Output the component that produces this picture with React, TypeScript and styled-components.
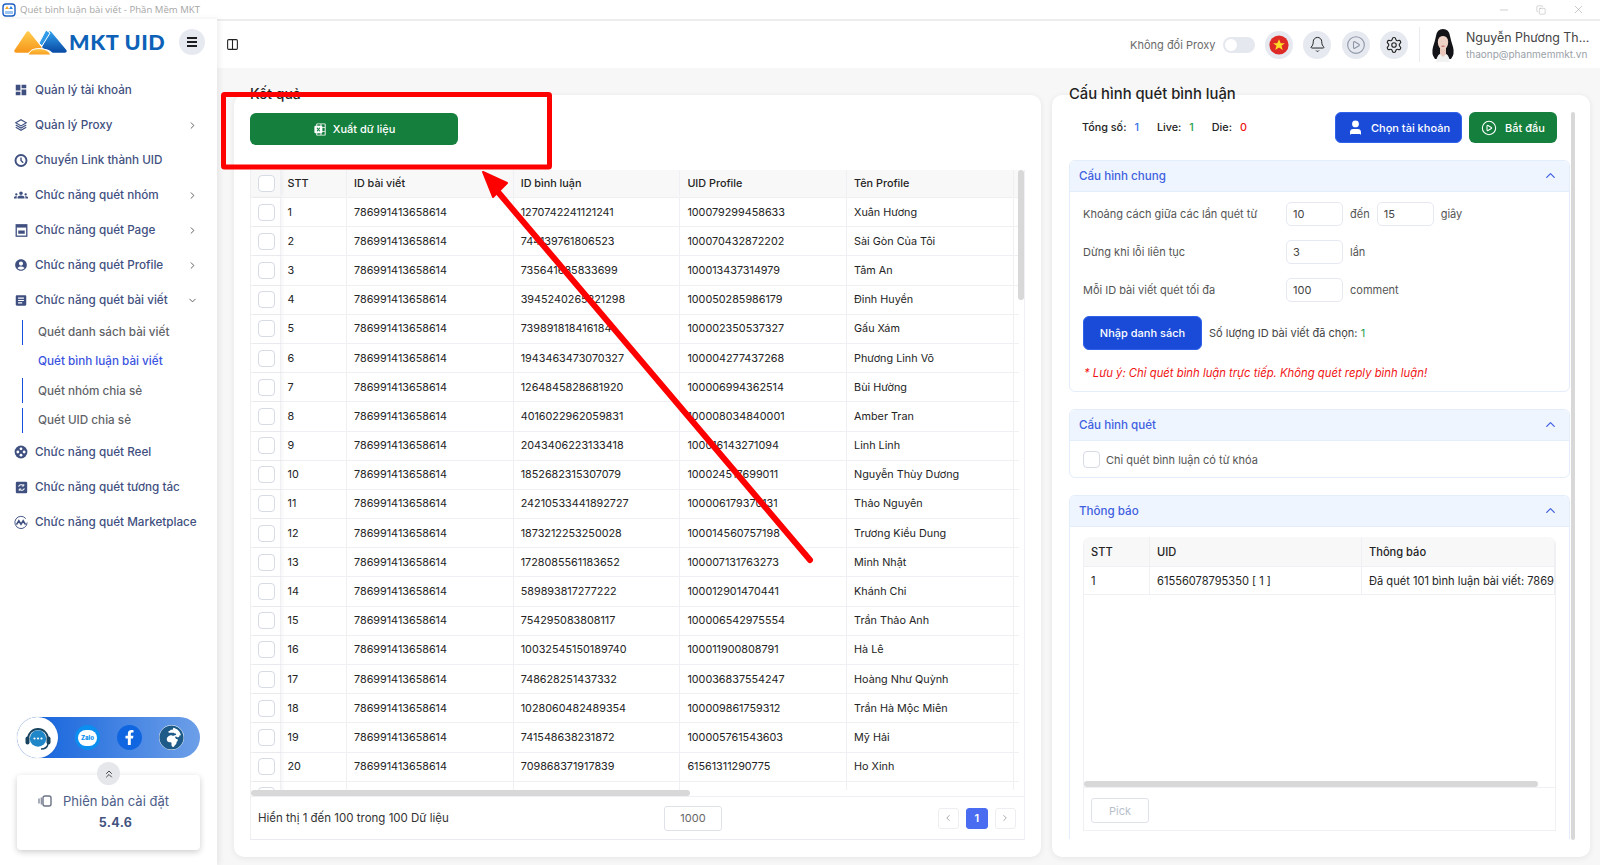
import React from "react";
import styled, { createGlobalStyle } from "styled-components";
import { ChevronRight, ChevronDown, ChevronUp, ChevronLeft, ChevronsUp, Bell, Settings, CirclePlay, Columns2, Minus, X, Copy, User } from "lucide-react";
import { MdDashboard, MdGroups, MdAccountCircle, MdArticle } from "react-icons/md";
import { FaFacebookF, FaGlobeAfrica } from "react-icons/fa";
import { PiMicrosoftExcelLogoFill } from "react-icons/pi";

const GlobalStyle = createGlobalStyle`
  html, body { margin: 0; padding: 0; background: #f7f7f7; }
  * { box-sizing: border-box; }
  body { font-family: Inter, "Noto Sans", sans-serif; }
`;

const Page = styled.div`
  width: 1600px; height: 865px; overflow: hidden; display: flex; flex-direction: column; position: relative; background: #f7f7f7;
`;
const TitleBar = styled.div`
  height: 19px; background: #fff; display: flex; align-items: center; padding-left: 2px; gap: 4px;
  font-size: 9.6px; color: #a6a6a6; flex: none;
`;
const TitleText = styled.span`flex: 1; font-family: "Open Sans", sans-serif;`;
const WinControls = styled.div`
  display: flex; align-items: center; gap: 26px; padding-right: 15px; color: #9c9c9c;
`;
const Body = styled.div`display: flex; flex: 1; min-height: 0;`;
const Sidebar = styled.aside`
  width: 217px; flex: none; background: #fff; display: flex; flex-direction: column; padding-top: 7px;
  box-shadow: 2px 0 6px rgba(0,0,0,.08); position: relative; z-index: 2;
`;
const LogoRow = styled.div`
  display: flex; align-items: center; height: 32px; padding-left: 13px; position: relative;
`;
const LogoText = styled.span`
  font-family: Lato, Inter, sans-serif; font-weight: 900; font-size: 21.6px; letter-spacing: .6px; margin-left: 1px;
  color: #0d62b8; white-space: nowrap;
`;
const Burger = styled.button`
  width: 26px; height: 26px; border-radius: 50%; border: 0; background: #e6e9f0; padding: 0; margin-left: auto; margin-right: 12px;
  display: flex; flex-direction: column; gap: 2px; align-items: center; justify-content: center;
  span { width: 10px; height: 2px; background: #1d1d1f; display: block; }
`;
const Menu = styled.nav`display: flex; flex-direction: column; padding-top: 14.5px;`;
const MenuItem = styled.div`
  height: 35px; display: flex; align-items: center; padding-left: 14px; padding-right: 19px; gap: 7px;
  font-size: 11.7px; font-weight: 500; color: #3f5080; white-space: nowrap;
`;
const MenuIcon = styled.span`
  width: 14px; height: 14px; display: flex; align-items: center; justify-content: center; flex: none; color: #3f5080;
`;
const MenuLabel = styled.span`flex: 1;`;
const SubMenu = styled.div`display: flex; flex-direction: column;`;
const SubWrap = styled.div`display: flex; align-items: center; height: 29.3px;`;
const SubItem = styled.div<{ $active?: boolean }>`
  height: 25px; margin-left: 22px; padding-left: 15px; display: flex; align-items: center;
  border-left: 1.5px solid ${p => (p.$active ? "transparent" : "#1550dc")};
  font-size: 11.7px; font-weight: 500; color: ${p => (p.$active ? "#3a53e0" : "#5f6368")}; white-space: nowrap;
`;
const SideBottom = styled.div`
  margin-top: auto; padding: 0 17px 15px; display: flex; flex-direction: column; align-items: stretch;
`;
const Contact = styled.div`
  height: 41px; border-radius: 21px; width: 183px; background: linear-gradient(90deg, #0d5fdc 0%, #6d9fe8 100%);
  display: flex; align-items: center; padding-right: 16px; justify-content: space-between;
`;
const HeadsetWrap = styled.div`
  width: 41px; height: 41px; border-radius: 50%; background: #fff; display: flex; align-items: center; justify-content: center;
  box-shadow: 0 0 2px rgba(0,0,0,.15);
`;
const ContactIcon = styled.div<{ $bg: string }>`
  width: 25px; height: 25px; border-radius: 50%; background: ${p => p.$bg}; color: #fff;
  display: flex; align-items: center; justify-content: center;
`;
const ContactGroup = styled.div`display: flex; gap: 17px; align-items: center;`;
const ZaloBubble = styled.div`
  width: 19px; height: 16px; border-radius: 8px; background: #fff; color: #0a8ff0; font-size: 6px; font-weight: 800;
  display: flex; align-items: center; justify-content: center;
`;
const VersionCard = styled.div`
  height: 75px; background: #fff; border-radius: 4px; box-shadow: 0 2px 6px rgba(0,0,0,.2); margin-top: 17px; position: relative;
  display: flex; flex-direction: column; align-items: center; padding: 18px 10px 0 0; gap: 6px;
`;
const Expander = styled.div`
  position: absolute; top: -13px; left: 80px; width: 23px; height: 23px; border-radius: 50%; background: #e5e7eb; color: #444;
  display: flex; align-items: center; justify-content: center;
`;
const VersionLine = styled.div`
  display: flex; align-items: center; gap: 11px; font-size: 13px; color: #4c5d88;
`;
const VersionNum = styled.div`font-size: 12.5px; font-weight: 700; color: #43547f; letter-spacing: .3px; margin-left: 24px;`;

const Main = styled.main`flex: 1; min-width: 0; display: flex; flex-direction: column;`;
const Header = styled.header`
  height: 49px; background: #fff; border-top: 2px solid #ededed; display: flex; align-items: center; padding: 0 8px 0 9px; flex: none;
  color: #222;
`;
const HeaderRight = styled.div`margin-left: auto; display: flex; align-items: center;`;
const ProxyLabel = styled.span`font-size: 11px; color: #6b6b6b; margin-right: 7px;`;
const Toggle = styled.div`
  width: 32px; height: 16px; border-radius: 8px; background: #e5e8ee; padding: 2px; margin-right: 10px;
  &::before { content: ""; display: block; width: 12px; height: 12px; border-radius: 50%; background: #fff; }
`;
const RoundBtn = styled.div`
  width: 28px; height: 28px; border-radius: 50%; background: #e6e9f0; display: flex; align-items: center; justify-content: center; margin-right: 10.5px; color: #222;
`;
const Divider = styled.div`width: 1.5px; height: 35px; background: #e9ebef; margin: 0 8px 0 0;`;
const UserBox = styled.div`display: flex; flex-direction: column; margin-left: 8px; width: 126px; white-space: nowrap; gap: 3px;`;
const UserName = styled.div`font-size: 12.4px; color: #444;`;
const UserMail = styled.div`font-size: 10px; color: #9a9fa8;`;

const Content = styled.div`flex: 1; min-height: 0; display: flex; gap: 11px; padding: 27px 10px 8px 17px;`;
const Card = styled.section<{ $w: number }>`
  width: ${p => p.$w}px; background: #fff; border-radius: 10px; box-shadow: 0 1px 6px rgba(0,0,0,.08);
  display: flex; flex-direction: column; flex: none; height: 762px;
`;
const LeftCard = styled(Card)`padding: 0 16px 17px 16px;`;
const RightCard = styled(Card)`padding: 0 20px 17px 17px; position: relative;`;
const CardTitle = styled.h2`
  margin: -10px 0 0; height: 18px; line-height: 18px; font-size: 14px; font-weight: 500; color: #1f1f1f; white-space: nowrap;
`;
const RightTitle = styled(CardTitle)`font-size: 14.8px;`;
const Btn = styled.button<{ $bg: string }>`
  background: ${p => p.$bg}; color: #fff; border: 0; border-radius: 6px; font-family: inherit; font-size: 11px; font-weight: 500;
  display: flex; align-items: center; justify-content: center; gap: 5px; padding: 0; white-space: nowrap;
`;
const ExportBtn = styled(Btn)`width: 208px; height: 32px; margin-top: 10px; flex: none;`;
const TableBox = styled.div`
  margin-top: 25px; flex: 1; min-height: 0; width: 775px; position: relative; display: flex; flex-direction: column; border-left: 1px solid #eef0f4; border-right: 1px solid #eef0f4;
`;
const TableScroll = styled.div`height: 620px; overflow: hidden; padding-right: 5px; flex: none; position: relative;`;
const DataRow = styled.div<{ $head?: boolean }>`
  display: grid; grid-template-columns: 29.5px 66.5px 166.7px 166.7px 166.7px 166.7px 60px; height: ${p => (p.$head ? "28px" : "29.2px")};
  border-bottom: 1px solid #eef0f4; background: ${p => (p.$head ? "#f8f8f8" : "#fff")};
  font-size: 10.8px; color: #242424; font-weight: ${p => (p.$head ? 500 : 400)};
  ${p => p.$head && "padding-bottom: 1px;"}
`;
const Cell = styled.div`
  display: flex; align-items: center; padding-left: 7px; border-right: 1px solid #eef0f4; white-space: nowrap; overflow: hidden;
`;
const CheckCell = styled(Cell)`padding-left: 7px; box-shadow: 2px 0 3px rgba(0,0,0,.04);`;
const Check = styled.span`
  width: 17px; height: 17px; border: 1px solid #d6dbe4; border-radius: 4px; background: #fff; display: block; flex: none;
`;
const VThumb = styled.div`
  position: absolute; right: 0; top: 0; width: 6px; height: 130px; background: #d8d8d8; border-radius: 3px;
`;
const HThumb = styled.div<{ $w: number }>`
  height: 6px; width: ${p => p.$w}px; background: #d8d8d8; border-radius: 3px; flex: none;
`;
const HTrack = styled.div`height: 7px; border-bottom: 1px solid #eef0f4; flex: none;`;
const TableFooter = styled.div`
  flex: 1; display: flex; align-items: center; padding: 0 8px 0 7px; position: relative; border-bottom: 1px solid #e9ebf0; font-size: 11.5px; color: #333;
`;
const FooterText = styled.span`width: 406px;`;
const PageSize = styled.div`
  width: 58px; height: 25px; border: 1px solid #dfe2e8; border-radius: 3px; display: flex; align-items: center; justify-content: center; font-size: 11px; color: #666;
`;
const Pager = styled.div`margin-left: auto; display: flex; gap: 7px;`;
const PageBtn = styled.div<{ $on?: boolean }>`
  width: 21.5px; height: 21px; border-radius: 3px; display: flex; align-items: center; justify-content: center; font-size: 11px; font-weight: 600;
  background: ${p => (p.$on ? "#4a6cf0" : "#fff")}; color: ${p => (p.$on ? "#fff" : "#999")}; border: 1px solid ${p => (p.$on ? "#4a6cf0" : "#eceef2")};
`;

const Toolbar = styled.div`display: flex; align-items: center; margin-top: 9px; height: 31px; flex: none; padding-right: 13px; padding-left: 13px;`;
const Stat = styled.span`font-size: 10.8px; font-weight: 500; color: #222; margin-right: 18px; display: flex; gap: 8px;`;
const StatVal = styled.span<{ $c: string }>`color: ${p => p.$c};`;
const BtnGroup = styled.div`margin-left: auto; display: flex; gap: 7px;`;
const ChooseBtn = styled(Btn)`width: 127px; height: 31px; gap: 7px; border: 1px solid #2f62ea;`;
const StartBtn = styled(Btn)`width: 88px; height: 31px; gap: 8px;`;
const Section = styled.div<{ $h: number; $open?: boolean }>`
  height: ${p => p.$h}px; flex: none; border: 1px solid #e3edfb; border-radius: 6px 6px ${p => (p.$open ? "0 0" : "6px 6px")}; display: flex; flex-direction: column;
  ${p => p.$open && "border-bottom: 0;"}
`;
const SectionHead = styled.div`
  height: 31px; flex: none; background: #eef5ff; border-bottom: 1px solid #e3edfb; border-radius: 6px 6px 0 0; display: flex; align-items: center; justify-content: space-between;
  padding: 0 11px 1px 9px; color: #3f5fe0; font-size: 11.6px; font-weight: 500;
`;
const Stack = styled.div`display: flex; flex-direction: column; gap: 17px; margin-top: 17px;`;
const SectionBody = styled.div`padding: 10px 13px; display: flex; flex-direction: column; gap: 14px; font-size: 11px; color: #555;`;
const FieldRow = styled.div`display: flex; align-items: center; height: 24px;`;
const FieldLabel = styled.span`width: 203px; flex: none;`;
const NumInput = styled.div`
  width: 57px; height: 24px; border: 1px solid #e6e9f2; border-radius: 5px; padding-left: 6px; display: flex; align-items: center; color: #444; background: #fff;
`;
const Unit = styled.span`margin: 0 7px;`;
const ImportRow = styled.div`display: flex; align-items: center; height: 34px; gap: 7px; color: #444;`;
const ImportBtn = styled(Btn)`width: 119px; height: 34px; border: 1px solid #2f62ea;`;
const Note = styled.div`font-style: italic; color: #f01414; font-size: 11.3px; margin-top: 2px; padding-left: 1px;`;
const CheckRow = styled.div`display: flex; align-items: center; gap: 6px; color: #555;`;
const NotifyBody = styled.div`flex: 1; min-height: 0; padding: 10px 13px 8px 13px; display: flex;`;
const NotifyTable = styled.div`
  flex: 1; border-radius: 8px 8px 0 0; border: 1px solid #eef0f4; border-top: 0; border-bottom: 0; display: flex; flex-direction: column; overflow: hidden;
`;
const NotifyRow = styled.div<{ $head?: boolean }>`
  display: grid; grid-template-columns: 66px 212px 1fr; height: ${p => (p.$head ? "30px" : "28px")}; flex: none;
  background: ${p => (p.$head ? "#f8f8f8" : "#fff")}; border-bottom: 1px solid #eef0f4; font-size: 11.1px; color: #242424; font-weight: ${p => (p.$head ? 500 : 400)};
`;
const Spacer = styled.div`flex: 1;`;
const PickArea = styled.div`
  height: 43px; flex: none; border-bottom: 1px solid #f0f1f4; padding: 10px 7px 0; display: flex;
`;
const PickBtn = styled.div`
  width: 58px; height: 25px; border: 1px solid #dfe2e8; border-radius: 3px; font-size: 11px; color: #b9bfca; display: flex; align-items: center; justify-content: center;
`;
const RightScroll = styled.div`
  position: absolute; right: 15.5px; top: 17px; width: 4px; height: 728px; background: #d8d8d8; border-radius: 2px;
`;
const Annotation = styled.svg`position: absolute; inset: 0; width: 1600px; height: 865px; pointer-events: none; z-index: 10;`;

const rows: [string, string, string][] = [
  ["1270742241121241", "100079299458633", "Xuân Hương"],
  ["744139761806523", "100070432872202", "Sài Gòn Của Tôi"],
  ["735641685833699", "100013437314979", "Tâm An"],
  ["3945240265221298", "100050285986179", "Đinh Huyền"],
  ["739891818416184", "100002350537327", "Gấu Xám"],
  ["1943463473070327", "100004277437268", "Phương Linh Võ"],
  ["1264845828681920", "100006994362514", "Bùi Hường"],
  ["4016022962059831", "100008034840001", "Amber Tran"],
  ["2043406223133418", "100016143271094", "Linh Linh"],
  ["1852682315307079", "100024517699011", "Nguyễn Thùy Dương"],
  ["24210533441892727", "100006179370131", "Thảo Nguyên"],
  ["1873212253250028", "100014560757198", "Trương Kiều Dung"],
  ["1728085561183652", "100007131763273", "Minh Nhật"],
  ["589893817277222", "100012901470441", "Khánh Chi"],
  ["754295083808117", "100006542975554", "Trần Thảo Anh"],
  ["10032545150189740", "100011900808791", "Hà Lê"],
  ["748628251437332", "100036837554247", "Hoàng Như Quỳnh"],
  ["1028060482489354", "100009861759312", "Trần Hà Mộc Miên"],
  ["741548638231872", "100005761543603", "Mỹ Hải"],
  ["709868371917839", "61561311290775", "Ho Xinh"],
  ["", "", ""],
];

const AppGlyph = () => (
  <svg width="14" height="14" viewBox="0 0 14 14">
    <rect x="1" y="1" width="12" height="12" rx="3" fill="#fff" stroke="#1d5fc4" strokeWidth="1.4" />
    <path d="M3 6l2-3 2 3z" fill="#f5a623" />
    <path d="M7 6l2-3 2 3z" fill="#2f7fe0" />
    <rect x="3" y="8" width="8" height="3" fill="#9cc4f2" />
  </svg>
);
const Logo = () => (
  <svg width="55" height="26" viewBox="0 0 55 26">
    <defs>
      <linearGradient id="lo" x1="0" y1="0" x2="0" y2="1"><stop offset="0" stopColor="#ffc94a" /><stop offset="1" stopColor="#f79a1e" /></linearGradient>
      <linearGradient id="lb" x1="0" y1="0" x2="0" y2="1"><stop offset="0" stopColor="#2f9be8" /><stop offset="1" stopColor="#0b4fa8" /></linearGradient>
    </defs>
    <path d="M3 22 L15 4 L27 19 Q19 17 15 22 Z" fill="url(#lo)" stroke="url(#lo)" strokeWidth="3.5" strokeLinejoin="round" />
    <path d="M31 18 L37 4 L52 22 L40 22 Q38 19 31 18 Z" fill="url(#lb)" stroke="url(#lb)" strokeWidth="3.5" strokeLinejoin="round" />
    <path d="M29 17 L37 4 L33 1 L26 14 Z" fill="#2f9be8" stroke="#fff" strokeWidth="1" />
    <path d="M15 26 Q17 19.5 26 19.5 Q35 19.5 38 26 Z" fill="url(#lo)" stroke="#fff" strokeWidth="1" />
  </svg>
);
const ProxyIcon = () => (
  <svg width="14" height="14" viewBox="0 0 16 16" fill="none" stroke="#3f5080" strokeWidth="1.3">
    <path d="M8 2l6 3.5L8 9 2 5.5z" /><path d="M2 8l6 3.5L14 8" /><path d="M2 10.5L8 14l6-3.5" />
  </svg>
);
const LinkClock = () => (
  <svg width="15" height="15" viewBox="0 0 16 16" fill="none">
    <circle cx="8" cy="8" r="6.3" stroke="#3f5080" strokeWidth="2.2" />
    <path d="M8 4.5V8l2.5 2.5" stroke="#3f5080" strokeWidth="1.6" />
  </svg>
);
const PageIcon = () => (
  <svg width="13" height="13" viewBox="0 0 16 16">
    <rect x="1.5" y="1" width="13" height="14" fill="none" stroke="#3f5080" strokeWidth="1.6" />
    <rect x="1.5" y="1" width="13" height="3.4" fill="#3f5080" />
    <rect x="4" y="8" width="8" height="4" fill="#3f5080" />
  </svg>
);
const ReelIcon = () => (
  <svg width="14" height="14" viewBox="0 0 16 16">
    <circle cx="8" cy="8" r="7.3" fill="#3f5080" />
    <circle cx="8" cy="4.4" r="1.6" fill="#fff" /><circle cx="8" cy="11.6" r="1.6" fill="#fff" /><circle cx="4.4" cy="8" r="1.6" fill="#fff" /><circle cx="11.6" cy="8" r="1.6" fill="#fff" />
  </svg>
);
const InteractIcon = () => (
  <svg width="13" height="13" viewBox="0 0 16 16">
    <rect x="1" y="1" width="14" height="14" rx="1.5" fill="#3f5080" />
    <path d="M4.5 7a3.5 3 0 0 1 6-1.4M11.5 9a3.5 3 0 0 1-6 1.4" stroke="#fff" strokeWidth="1.3" fill="none" />
    <path d="M10.8 3.8v2.4H8.4M5.2 12.2V9.8h2.4" stroke="#fff" strokeWidth="1.1" fill="none" />
  </svg>
);
const MarketIcon = () => (
  <svg width="15" height="15" viewBox="0 0 16 16" fill="none" stroke="#3f5080">
    <path d="M13.5 3.6A7 7 0 1 0 15 8" strokeWidth="1.1" />
    <path d="M2.8 10.5L5.5 6l2.5 4 2.5-4 2.7 4.5" strokeWidth="1.8" />
  </svg>
);
const VersionIcon = () => (
  <svg width="14" height="12" viewBox="0 0 14 12">
    <rect x="5" y="1" width="8" height="10" rx="2" fill="none" stroke="#6b7385" strokeWidth="1.4" />
    <path d="M3.4 2.5v7M1 3.5v5" stroke="#8b92a3" strokeWidth="1.5" />
  </svg>
);
const Headset = () => (
  <svg width="28" height="28" viewBox="0 0 28 28">
    <path d="M4 15a10 10 0 0 1 20 0" fill="none" stroke="#17435f" strokeWidth="1.8" />
    <rect x="1.5" y="12.5" width="4" height="8" rx="2" fill="#17435f" />
    <rect x="22.5" y="12.5" width="4" height="8" rx="2" fill="#17435f" />
    <path d="M24 20q-1 5-7 5" fill="none" stroke="#17435f" strokeWidth="1.4" />
    <circle cx="14" cy="14.5" r="8.2" fill="#1f86c8" />
    <circle cx="10.5" cy="14.5" r="1.1" fill="#fff" /><circle cx="14" cy="14.5" r="1.1" fill="#fff" /><circle cx="17.5" cy="14.5" r="1.1" fill="#fff" />
  </svg>
);
const Flag = () => (
  <svg width="20" height="20" viewBox="0 0 20 20">
    <circle cx="10" cy="10" r="9.6" fill="#de2a26" />
    <path d="M10 4.2l1.7 4h4.2l-3.4 2.6 1.3 4.2L10 12.4 6.2 15l1.3-4.2L4.1 8.2h4.2z" fill="#ffde2a" />
  </svg>
);
const Avatar = () => (
  <svg width="30" height="34" viewBox="0 0 30 34">
    <path d="M8 8Q9 1 15 1q6 0 7 7 1 5 3 11 2 7-2 12l-16 0Q3 26 5 19 7 13 8 8Z" fill="#141318" />
    <path d="M8 34q1-9 7-9 6 0 7 9z" fill="#f3f2f2" />
    <path d="M12 20h6v6l-3 3-3-3z" fill="#e9c8bb" />
    <ellipse cx="15" cy="14" rx="5.2" ry="7.5" fill="#eed2c6" />
    <path d="M9.5 12Q10 5 15 5q5 0 5.5 7-2-4-5.5-4t-5.5 4Z" fill="#141318" />
    <path d="M13.5 18.2h3" stroke="#b8434a" strokeWidth=".9" />
  </svg>
);
const Annotations = () => (
  <Annotation viewBox="0 0 1600 865">
    <rect x="223.5" y="94.5" width="326" height="72.5" fill="none" stroke="#ff0000" strokeWidth="5" rx="1" />
    <path d="M810 560 L498 192" stroke="#ff0000" strokeWidth="6" strokeLinecap="round" />
    <path d="M483 172 L507 183 L493 197 Z" fill="#ff0000" stroke="#ff0000" strokeWidth="2" strokeLinejoin="round" />
  </Annotation>
);

export default function App() {
  return (
    <Page>
      <GlobalStyle />
      <TitleBar>
        <AppGlyph />
        <TitleText>Quét bình luận bài viết - Phần Mềm MKT</TitleText>
        <WinControls>
          <Minus size={12} strokeWidth={1} />
          <Copy size={10} strokeWidth={1} />
          <X size={13} strokeWidth={1} />
        </WinControls>
      </TitleBar>
      <Body>
        <Sidebar>
          <LogoRow>
            <Logo />
            <LogoText>MKT UID</LogoText>
            <Burger><span /><span /><span /></Burger>
          </LogoRow>
          <Menu>
            <MenuItem><MenuIcon><MdDashboard size={14} /></MenuIcon><MenuLabel>Quản lý tài khoản</MenuLabel></MenuItem>
            <MenuItem><MenuIcon><ProxyIcon /></MenuIcon><MenuLabel>Quản lý Proxy</MenuLabel><ChevronRight size={11} color="#555" /></MenuItem>
            <MenuItem><MenuIcon><LinkClock /></MenuIcon><MenuLabel>Chuyển Link thành UID</MenuLabel></MenuItem>
            <MenuItem><MenuIcon><MdGroups size={16} /></MenuIcon><MenuLabel>Chức năng quét nhóm</MenuLabel><ChevronRight size={11} color="#555" /></MenuItem>
            <MenuItem><MenuIcon><PageIcon /></MenuIcon><MenuLabel>Chức năng quét Page</MenuLabel><ChevronRight size={11} color="#555" /></MenuItem>
            <MenuItem><MenuIcon><MdAccountCircle size={16} /></MenuIcon><MenuLabel>Chức năng quét Profile</MenuLabel><ChevronRight size={11} color="#555" /></MenuItem>
            <MenuItem><MenuIcon><MdArticle size={15} /></MenuIcon><MenuLabel>Chức năng quét bài viết</MenuLabel><ChevronDown size={11} color="#555" /></MenuItem>
            <SubMenu>
              <SubWrap><SubItem>Quét danh sách bài viết</SubItem></SubWrap>
              <SubWrap><SubItem $active>Quét bình luận bài viết</SubItem></SubWrap>
              <SubWrap><SubItem>Quét nhóm chia sẻ</SubItem></SubWrap>
              <SubWrap><SubItem>Quét UID chia sẻ</SubItem></SubWrap>
            </SubMenu>
            <MenuItem><MenuIcon><ReelIcon /></MenuIcon><MenuLabel>Chức năng quét Reel</MenuLabel></MenuItem>
            <MenuItem><MenuIcon><InteractIcon /></MenuIcon><MenuLabel>Chức năng quét tương tác</MenuLabel></MenuItem>
            <MenuItem><MenuIcon><MarketIcon /></MenuIcon><MenuLabel>Chức năng quét Marketplace</MenuLabel></MenuItem>
          </Menu>
          <SideBottom>
            <Contact>
              <HeadsetWrap><Headset /></HeadsetWrap>
              <ContactGroup>
                <ContactIcon $bg="#0a8ff0"><ZaloBubble>Zalo</ZaloBubble></ContactIcon>
                <ContactIcon $bg="#0f66e0"><FaFacebookF size={15} /></ContactIcon>
                <ContactIcon $bg="#fff"><FaGlobeAfrica size={25} color="#1d5a88" /></ContactIcon>
              </ContactGroup>
            </Contact>
            <VersionCard>
              <Expander><ChevronsUp size={12} /></Expander>
              <VersionLine>
                <VersionIcon />
                Phiên bản cài đặt
              </VersionLine>
              <VersionNum>5.4.6</VersionNum>
            </VersionCard>
          </SideBottom>
        </Sidebar>
        <Main>
          <Header>
            <Columns2 size={13} strokeWidth={2} />
            <HeaderRight>
              <ProxyLabel>Không đổi Proxy</ProxyLabel>
              <Toggle />
              <RoundBtn><Flag /></RoundBtn>
              <RoundBtn><Bell size={17} strokeWidth={1.4} /></RoundBtn>
              <RoundBtn><CirclePlay size={20} strokeWidth={1.3} color="#8e96a5" /></RoundBtn>
              <RoundBtn><Settings size={18} strokeWidth={1.5} /></RoundBtn>
              <Divider />
              <Avatar />
              <UserBox>
                <UserName>Nguyễn Phương Th...</UserName>
                <UserMail>thaonp@phanmemmkt.vn</UserMail>
              </UserBox>
            </HeaderRight>
          </Header>
          <Content>
            <LeftCard $w={807}>
              <CardTitle>Kết quả</CardTitle>
              <ExportBtn $bg="#157f3d"><PiMicrosoftExcelLogoFill size={15} />Xuất dữ liệu</ExportBtn>
              <TableBox>
                <TableScroll>
                  <DataRow $head>
                    <CheckCell><Check /></CheckCell>
                    <Cell>STT</Cell><Cell>ID bài viết</Cell><Cell>ID bình luận</Cell><Cell>UID Profile</Cell><Cell>Tên Profile</Cell><Cell />
                  </DataRow>
                  {rows.map((r, i) => (
                    <DataRow key={i}>
                      <CheckCell><Check /></CheckCell>
                      <Cell>{i < 20 ? i + 1 : ""}</Cell>
                      <Cell>{i < 20 ? "786991413658614" : ""}</Cell>
                      <Cell>{r[0]}</Cell><Cell>{r[1]}</Cell><Cell>{r[2]}</Cell><Cell />
                    </DataRow>
                  ))}
                  <VThumb />
                </TableScroll>
                <HTrack><HThumb $w={439} /></HTrack>
                <TableFooter>
                  <FooterText>Hiển thị 1 đến 100 trong 100 Dữ liệu</FooterText>
                  <PageSize>1000</PageSize>
                  <Pager>
                    <PageBtn><ChevronLeft size={10} /></PageBtn>
                    <PageBtn $on>1</PageBtn>
                    <PageBtn><ChevronRight size={10} /></PageBtn>
                  </Pager>
                </TableFooter>
              </TableBox>
            </LeftCard>
            <RightCard $w={538}>
              <RightTitle>Cấu hình quét bình luận</RightTitle>
              <RightScroll />
              <Toolbar>
                <Stat>Tổng số: <StatVal $c="#2f6fe8">1</StatVal></Stat>
                <Stat>Live: <StatVal $c="#1f9d4d">1</StatVal></Stat>
                <Stat>Die: <StatVal $c="#f01414">0</StatVal></Stat>
                <BtnGroup>
                  <ChooseBtn $bg="#1a4bd8"><User size={17} fill="#fff" strokeWidth={1.5} />Chọn tài khoản</ChooseBtn>
                  <StartBtn $bg="#157f3d"><CirclePlay size={16} strokeWidth={1.6} />Bắt đầu</StartBtn>
                </BtnGroup>
              </Toolbar>
              <Stack>
                <Section $h={232}>
                  <SectionHead>Cấu hình chung<ChevronUp size={15} /></SectionHead>
                  <SectionBody>
                    <FieldRow><FieldLabel>Khoảng cách giữa các lần quét từ</FieldLabel><NumInput>10</NumInput><Unit>đến</Unit><NumInput>15</NumInput><Unit>giây</Unit></FieldRow>
                    <FieldRow><FieldLabel>Dừng khi lỗi liên tục</FieldLabel><NumInput>3</NumInput><Unit>lần</Unit></FieldRow>
                    <FieldRow><FieldLabel>Mỗi ID bài viết quét tối đa</FieldLabel><NumInput>100</NumInput><Unit>comment</Unit></FieldRow>
                    <ImportRow><ImportBtn $bg="#1a4bd8">Nhập danh sách</ImportBtn><span>Số lượng ID bài viết đã chọn: <StatVal $c="#1f9d4d">1</StatVal></span></ImportRow>
                    <Note>* Lưu ý: Chỉ quét bình luận trực tiếp. Không quét reply bình luận!</Note>
                  </SectionBody>
                </Section>
                <Section $h={69}>
                  <SectionHead>Cấu hình quét<ChevronUp size={15} /></SectionHead>
                  <SectionBody><CheckRow><Check />Chỉ quét bình luận có từ khóa</CheckRow></SectionBody>
                </Section>
                <Section $h={344} $open>
                  <SectionHead>Thông báo<ChevronUp size={15} /></SectionHead>
                  <NotifyBody>
                    <NotifyTable>
                      <NotifyRow $head><Cell>STT</Cell><Cell>UID</Cell><Cell>Thông báo</Cell></NotifyRow>
                      <NotifyRow><Cell>1</Cell><Cell>61556078795350 [ 1 ]</Cell><Cell>Đã quét 101 bình luận bài viết: 7869</Cell></NotifyRow>
                      <Spacer />
                      <HTrack><HThumb $w={454} /></HTrack>
                      <PickArea><PickBtn>Pick</PickBtn></PickArea>
                    </NotifyTable>
                  </NotifyBody>
                </Section>
              </Stack>
            </RightCard>
          </Content>
        </Main>
      </Body>
      <Annotations />
    </Page>
  );
}
